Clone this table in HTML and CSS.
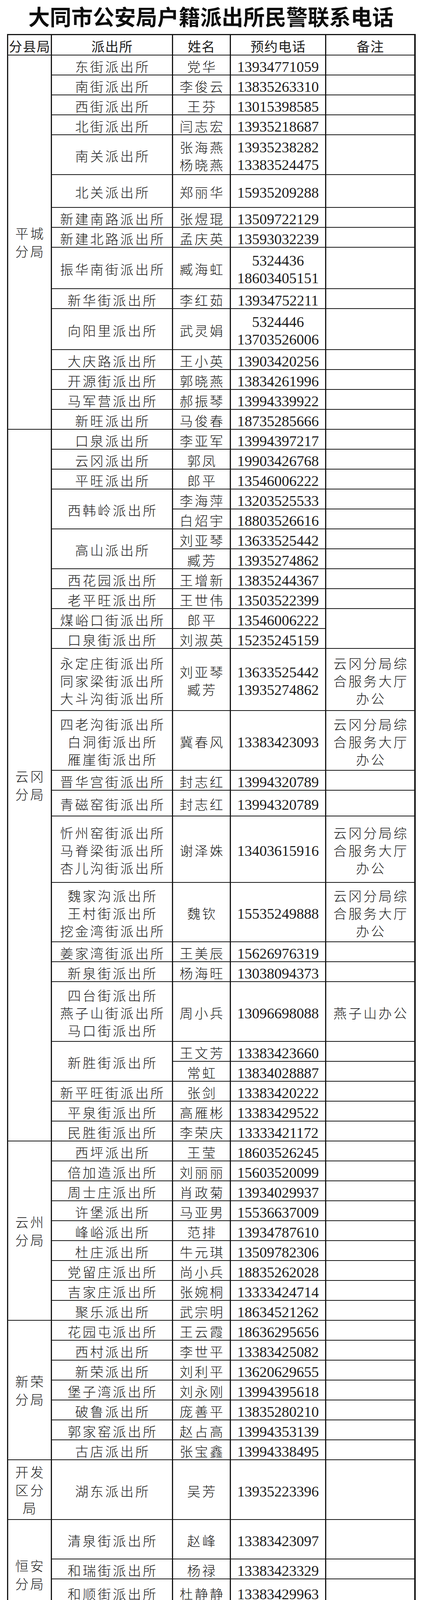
FILE: index.html
```html
<!DOCTYPE html>
<html lang="zh-CN">
<head>
<meta charset="utf-8">
<title>大同市公安局户籍派出所民警联系电话</title>
<link rel="stylesheet" href="styles.css">
</head>
<body>
<h1 class="title">大同市公安局户籍派出所民警联系电话</h1>
<table class="sheet">
<colgroup><col class="c1"><col class="c2"><col class="c3"><col class="c4"><col class="c5"></colgroup>
<tr class="hd"><th>分县局</th><th>派出所</th><th>姓名</th><th>预约电话</th><th>备注</th></tr>

<tr><td class="g" rowspan="15">平城<br>分局</td><td>东街派出所</td><td>党华</td><td class="ph">13934771059</td><td></td></tr>
<tr><td>南街派出所</td><td>李俊云</td><td class="ph">13835263310</td><td></td></tr>
<tr><td>西街派出所</td><td>王芬</td><td class="ph">13015398585</td><td></td></tr>
<tr><td>北街派出所</td><td>闫志宏</td><td class="ph">13935218687</td><td></td></tr>
<tr class="h102"><td>南关派出所</td><td class="ml">张海燕<br>杨晓燕</td><td class="ph ml">13935238282<br>13383524475</td><td></td></tr>
<tr class="h84"><td>北关派出所</td><td>郑丽华</td><td class="ph">15935209288</td><td></td></tr>
<tr><td>新建南路派出所</td><td>张煜琨</td><td class="ph">13509722129</td><td></td></tr>
<tr><td>新建北路派出所</td><td>孟庆英</td><td class="ph">13593032239</td><td></td></tr>
<tr class="h106"><td>振华南街派出所</td><td>臧海虹</td><td class="ph ml">5324436<br>18603405151</td><td></td></tr>
<tr><td>新华街派出所</td><td>李红茹</td><td class="ph">13934752211</td><td></td></tr>
<tr class="h105"><td>向阳里派出所</td><td>武灵娟</td><td class="ph ml">5324446<br>13703526006</td><td></td></tr>
<tr><td>大庆路派出所</td><td>王小英</td><td class="ph">13903420256</td><td></td></tr>
<tr><td>开源街派出所</td><td>郭晓燕</td><td class="ph">13834261996</td><td></td></tr>
<tr><td>马军营派出所</td><td>郝振琴</td><td class="ph">13994339922</td><td></td></tr>
<tr><td>新旺派出所</td><td>马俊春</td><td class="ph">18735285666</td><td></td></tr>

<tr><td class="g" rowspan="25">云冈<br>分局</td><td>口泉派出所</td><td>李亚军</td><td class="ph">13994397217</td><td></td></tr>
<tr><td>云冈派出所</td><td>郭凤</td><td class="ph">19903426768</td><td></td></tr>
<tr><td>平旺派出所</td><td>郎平</td><td class="ph">13546006222</td><td></td></tr>
<tr><td rowspan="2">西韩岭派出所</td><td>李海萍</td><td class="ph">13203525533</td><td></td></tr>
<tr><td>白炤宇</td><td class="ph">18803526616</td><td></td></tr>
<tr><td rowspan="2">高山派出所</td><td>刘亚琴</td><td class="ph">13633525442</td><td></td></tr>
<tr><td>臧芳</td><td class="ph">13935274862</td><td></td></tr>
<tr><td>西花园派出所</td><td>王增新</td><td class="ph">13835244367</td><td></td></tr>
<tr><td>老平旺派出所</td><td>王世伟</td><td class="ph">13503522399</td><td></td></tr>
<tr><td>煤峪口街派出所</td><td>郎平</td><td class="ph">13546006222</td><td rowspan="2"></td></tr>
<tr><td>口泉街派出所</td><td>刘淑英</td><td class="ph">15235245159</td></tr>
<tr class="h159"><td class="ml">永定庄街派出所<br>同家梁街派出所<br>大斗沟街派出所</td><td class="ml">刘亚琴<br>臧芳</td><td class="ph ml">13633525442<br>13935274862</td><td class="ml">云冈分局综<br>合服务大厅<br>办公</td></tr>
<tr class="h153"><td class="ml">四老沟街派出所<br>白洞街派出所<br>雁崖街派出所</td><td>冀春风</td><td class="ph">13383423093</td><td class="ml">云冈分局综<br>合服务大厅<br>办公</td></tr>
<tr><td>晋华宫街派出所</td><td>封志红</td><td class="ph">13994320789</td><td></td></tr>
<tr class="h66"><td>青磁窑街派出所</td><td>封志红</td><td class="ph">13994320789</td><td></td></tr>
<tr class="h170"><td class="ml">忻州窑街派出所<br>马脊梁街派出所<br>杏儿沟街派出所</td><td>谢泽姝</td><td class="ph">13403615916</td><td class="ml">云冈分局综<br>合服务大厅<br>办公</td></tr>
<tr class="h152"><td class="ml">魏家沟派出所<br>王村街派出所<br>挖金湾街派出所</td><td>魏钦</td><td class="ph">15535249888</td><td class="ml">云冈分局综<br>合服务大厅<br>办公</td></tr>
<tr><td>姜家湾街派出所</td><td>王美辰</td><td class="ph">15626976319</td><td></td></tr>
<tr><td>新泉街派出所</td><td>杨海旺</td><td class="ph">13038094373</td><td></td></tr>
<tr class="h153"><td class="ml">四台街派出所<br>燕子山街派出所<br>马口街派出所</td><td>周小兵</td><td class="ph">13096698088</td><td>燕子山办公</td></tr>
<tr><td rowspan="2">新胜街派出所</td><td>王文芳</td><td class="ph">13383423660</td><td></td></tr>
<tr><td>常虹</td><td class="ph">13834028887</td><td></td></tr>
<tr><td>新平旺街派出所</td><td>张剑</td><td class="ph">13383420222</td><td></td></tr>
<tr><td>平泉街派出所</td><td>高雁彬</td><td class="ph">13383429522</td><td></td></tr>
<tr><td>民胜街派出所</td><td>李荣庆</td><td class="ph">13333421172</td><td></td></tr>

<tr><td class="g" rowspan="9">云州<br>分局</td><td>西坪派出所</td><td>王莹</td><td class="ph">18603526245</td><td></td></tr>
<tr><td>倍加造派出所</td><td>刘丽丽</td><td class="ph">15603520099</td><td></td></tr>
<tr><td>周士庄派出所</td><td>肖政菊</td><td class="ph">13934029937</td><td></td></tr>
<tr><td>许堡派出所</td><td>马亚男</td><td class="ph">15536637009</td><td></td></tr>
<tr><td>峰峪派出所</td><td>范排</td><td class="ph">13934787610</td><td></td></tr>
<tr><td>杜庄派出所</td><td>牛元琪</td><td class="ph">13509782306</td><td></td></tr>
<tr><td>党留庄派出所</td><td>尚小兵</td><td class="ph">18835262028</td><td></td></tr>
<tr><td>吉家庄派出所</td><td>张婉桐</td><td class="ph">13333424714</td><td></td></tr>
<tr><td>聚乐派出所</td><td>武宗明</td><td class="ph">18634521262</td><td></td></tr>

<tr><td class="g" rowspan="7">新荣<br>分局</td><td>花园屯派出所</td><td>王云霞</td><td class="ph">18636295656</td><td></td></tr>
<tr><td>西村派出所</td><td>李世平</td><td class="ph">13383425082</td><td></td></tr>
<tr><td>新荣派出所</td><td>刘利平</td><td class="ph">13620629655</td><td></td></tr>
<tr><td>堡子湾派出所</td><td>刘永刚</td><td class="ph">13994395618</td><td></td></tr>
<tr><td>破鲁派出所</td><td>庞善平</td><td class="ph">13835280210</td><td></td></tr>
<tr><td>郭家窑派出所</td><td>赵占高</td><td class="ph">13994353139</td><td></td></tr>
<tr><td>古店派出所</td><td>张宝鑫</td><td class="ph">13994338495</td><td></td></tr>

<tr class="h153"><td class="g">开发<br>区分<br>局</td><td>湖东派出所</td><td>吴芳</td><td class="ph">13935223396</td><td></td></tr>

<tr class="h101"><td class="g" rowspan="4">恒安<br>分局</td><td>清泉街派出所</td><td>赵峰</td><td class="ph">13383423097</td><td></td></tr>
<tr><td>和瑞街派出所</td><td>杨禄</td><td class="ph">13383423329</td><td></td></tr>
<tr class="h69"><td>和顺街派出所</td><td>杜静静</td><td class="ph">13383429963</td><td></td></tr>
<tr class="h60"><td>平盛路派出所</td><td>麻秀芳</td><td class="ph">13383422991</td><td></td></tr>

<tr class="h102"><td class="g">御东<br>分局</td><td>水泊寺派出所</td><td>王亚兰</td><td class="ph">13835235176</td><td></td></tr>

<tr><td class="g" rowspan="12">阳高<br>县公<br>安局</td><td rowspan="2">龙泉派出所</td><td>曹瑞元</td><td class="ph">18636283951</td><td></td></tr>
<tr><td>陈晓岗</td><td class="ph">18935227177</td><td></td></tr>
<tr class="h50 thk"><td>罗文皂派出所</td><td>韩承霖</td><td class="ph">15386820003</td><td></td></tr>
<tr><td>长城派出所</td><td>贾龙鹏</td><td class="ph">18734287790</td><td></td></tr>
<tr><td>大白登派出所</td><td>王青</td><td class="ph">18636294576</td><td></td></tr>
<tr><td>狮子屯派出所</td><td>任志军</td><td class="ph">13546065860</td><td></td></tr>
<tr><td>王官屯派出所</td><td>许长江</td><td class="ph">13835233220</td><td></td></tr>
<tr><td>下深井派出所</td><td>薛跃文</td><td class="ph">13593055499</td><td></td></tr>
<tr><td>古城派出所</td><td>徐飞</td><td class="ph">13133129571</td><td></td></tr>
<tr><td>东小村派出所</td><td>陈志新</td><td class="ph">15003425888</td><td></td></tr>
<tr><td>友宰派出所</td><td>睢建梁</td><td class="ph">13620628789</td><td></td></tr>
<tr><td>鳌石派出所</td><td>李伟</td><td class="ph">13994441195</td><td></td></tr>

<tr><td class="g" rowspan="11">天镇<br>县公<br>安局</td><td>玉泉派出所</td><td>任丕军</td><td class="ph">13663522735</td><td></td></tr>
<tr><td>谷前堡派出所</td><td>逯雅楠</td><td class="ph">18535298235</td><td></td></tr>
<tr><td>米薪关派出所</td><td>闫维龙</td><td class="ph">13593035757</td><td></td></tr>
<tr><td>逯家湾派出所</td><td>刘洪海</td><td class="ph">13753264275</td><td></td></tr>
<tr><td>新平派出所</td><td>许卫锋</td><td class="ph">13008090877</td><td></td></tr>
<tr><td>三十里铺派出所</td><td>孙国伟</td><td class="ph">13546064106</td><td></td></tr>
<tr><td>赵家沟派出所</td><td>宋立海</td><td class="ph">13383425800</td><td></td></tr>
<tr class="h50"><td>贾家屯派出所</td><td>张学军</td><td class="ph">18535273083</td><td></td></tr>
<tr><td>南高崖派出所</td><td>杜兴录</td><td class="ph">13994352023</td><td></td></tr>
<tr><td>张西河派出所</td><td>贾虎文</td><td class="ph">15034233688</td><td></td></tr>
<tr><td>马家皂派出所</td><td>睢谢平</td><td class="ph">13028093300</td><td></td></tr>

<tr><td class="g" rowspan="17">浑源<br>县公<br>安局</td><td rowspan="2">永安派出所</td><td>刘艳霞</td><td class="ph">13935263827</td><td></td></tr>
<tr><td>翟敏敏</td><td class="ph">13835233959</td><td></td></tr>
<tr><td>下韩派出所</td><td>郝延伟</td><td class="ph">18636288110</td><td></td></tr>
<tr><td>大仁庄派出所</td><td>吴剑文</td><td class="ph">15203520951</td><td></td></tr>
<tr><td>蔡村派出所</td><td>郜捷</td><td class="ph">18535271597</td><td></td></tr>
<tr><td>千佛岭派出所</td><td>武自强</td><td class="ph">13134627669</td><td></td></tr>
<tr class="h50"><td>王庄堡派出所</td><td>雒晓超</td><td class="ph">15735121340</td><td></td></tr>
<tr><td>裴村派出所</td><td>刘旭</td><td class="ph">16634022324</td><td></td></tr>
<tr><td>东坊城派出所</td><td>王磊</td><td class="ph">13994413207</td><td></td></tr>
<tr><td>青磁窑派出所</td><td>曹雁军</td><td class="ph">13734203232</td><td></td></tr>
<tr><td>西留派出所</td><td>杨德志</td><td class="ph">15935216629</td><td></td></tr>
<tr><td>南榆林派出所</td><td>王泽超</td><td class="ph">13327528875</td><td></td></tr>
<tr><td>驼峰派出所</td><td>曹海东</td><td class="ph">13935263946</td><td></td></tr>
<tr><td>吴城派出所</td><td>赵俊</td><td class="ph">15835224597</td><td></td></tr>
<tr><td>西坊城派出所</td><td>范国盛</td><td class="ph">13994394633</td><td></td></tr>
<tr><td>官儿派出所</td><td>李颖</td><td class="ph">18635279708</td><td></td></tr>
<tr><td>沙圪坨派出所</td><td>刘润德</td><td class="ph">13191123569</td><td></td></tr>

<tr class="h66"><td class="g" rowspan="11">灵丘<br>县公<br>安局</td><td>武灵派出所</td><td>陈振华</td><td class="ph">13994321812</td><td></td></tr>
<tr class="h50"><td>上寨派出所</td><td>王海伟</td><td class="ph">13513660616</td><td></td></tr>
<tr><td>东河南派出所</td><td>张孝海</td><td class="ph">13753247060</td><td></td></tr>
<tr><td>落水河派出所</td><td>武凌波</td><td class="ph">13303423055</td><td></td></tr>
<tr><td>石家田派出所</td><td>孙飞龙</td><td class="ph">13935200220</td><td></td></tr>
<tr><td>柳科派出所</td><td>乔一江</td><td class="ph">18636813287</td><td></td></tr>
<tr><td>独峪派出所</td><td>邓保林</td><td class="ph">13994462535</td><td></td></tr>
<tr><td>赵北派出所</td><td>侯小锁</td><td class="ph">13934251985</td><td></td></tr>
<tr><td>下关派出所</td><td>刘拥兵</td><td class="ph">18735294675</td><td></td></tr>
<tr><td>红石塄派出所</td><td>张志强</td><td class="ph">13835207387</td><td></td></tr>
<tr class="h50"><td>白崖台派出所</td><td>刘晓虎</td><td class="ph">18835208589</td><td></td></tr>

<tr><td class="g" rowspan="8">广灵<br>县公<br>安局</td><td>壶泉派出所</td><td>杨帆</td><td class="ph">13623522841</td><td></td></tr>
<tr><td>蕉山派出所</td><td>李江</td><td class="ph">18635236806</td><td></td></tr>
<tr><td>加斗派出所</td><td>王正杰</td><td class="ph">15203422857</td><td></td></tr>
<tr><td>宜兴派出所</td><td>焦天红</td><td class="ph">15235206555</td><td></td></tr>
<tr><td>作疃派出所</td><td>张军</td><td class="ph">17735222229</td><td></td></tr>
<tr><td>斗泉派出所</td><td>智霆威</td><td class="ph">15135200977</td><td></td></tr>
<tr><td>南村派出所</td><td>陈全杰</td><td class="ph">13383426465</td><td></td></tr>
<tr><td>梁庄派出所</td><td>宋立河</td><td class="ph">18003525884</td><td></td></tr>

<tr><td class="g" rowspan="8">左云<br>县公<br>安局</td><td>云兴派出所</td><td>左志强</td><td class="ph">13835208444</td><td></td></tr>
<tr><td>店湾派出所</td><td>刘日宝</td><td class="ph">18636216051</td><td></td></tr>
<tr class="h50"><td>鹊儿山派出所</td><td>李满</td><td class="ph">18636261010</td><td></td></tr>
<tr><td>马道头派出所</td><td>李君</td><td class="ph">13935217855</td><td></td></tr>
<tr><td>小京庄派出所</td><td>宋昺</td><td class="ph">13623526855</td><td></td></tr>
<tr><td>张家场派出所</td><td>闫贵</td><td class="ph">15110755775</td><td></td></tr>
<tr><td>三屯派出所</td><td>张杰</td><td class="ph">18734295551</td><td></td></tr>
<tr class="h49"><td>管家堡派出所</td><td>田晓东</td><td class="ph">13753249170</td><td></td></tr>
</table>
</body>
</html>
```

FILE: styles.css
```css
* { box-sizing: border-box; }
html, body { margin: 0; padding: 0; background: #ffffff; }
body {
  width: 1080px;
  color: #1c1c1c;
  font-family: "Noto Sans CJK SC", "Noto Sans", sans-serif;
}
.title {
  margin: 0;
  height: 80px;
  line-height: 80px;
  text-align: center;
  font-size: 55px;
  font-weight: 700;
  color: #0d0d0d;
  letter-spacing: 0;
}
.sheet {
  margin: 7px 0 0 18px;
  width: 1046px;
  table-layout: fixed;
  border-collapse: separate;
  border-spacing: 0;
  border-style: solid;
  border-color: #161616;
  border-width: 3px 1px 1px 3px;
}
.c1 { width: 112px; }
.c2 { width: 310px; }
.c3 { width: 148px; }
.c4 { width: 244px; }
.c5 { width: 228px; }
.sheet tr { height: 51px; }
.sheet tr.hd { height: 52px; }
.sheet tr.h49 { height: 49px; }
.sheet tr.h50 { height: 50px; }
.sheet tr.h60 { height: 60px; }
.sheet tr.h66 { height: 66px; }
.sheet tr.h69 { height: 69px; }
.sheet tr.h84 { height: 84px; }
.sheet tr.h101 { height: 101px; }
.sheet tr.h102 { height: 102px; }
.sheet tr.h105 { height: 105px; }
.sheet tr.h106 { height: 106px; }
.sheet tr.h152 { height: 152px; }
.sheet tr.h153 { height: 153px; }
.sheet tr.h159 { height: 159px; }
.sheet tr.h170 { height: 170px; }
.sheet th, .sheet td {
  padding: 5px 0 0 4px;
  border-right: 3px solid #161616;
  border-bottom: 2px solid #161616;
  text-align: center;
  vertical-align: middle;
  font-size: 34px;
  line-height: 41px;
  letter-spacing: 4.5px;
  font-weight: 300;
  white-space: nowrap;
}
.sheet th {
  font-weight: 400;
  letter-spacing: 1.5px;
  padding-left: 1px;
}
.sheet tr.thk td { border-bottom-width: 3px; }
.sheet td.ml { line-height: 45px; }
.sheet td.ph {
  font-family: "Liberation Serif", "Times New Roman", serif;
  font-size: 38px;
  font-weight: 400;
  letter-spacing: 0;
  line-height: 38px;
  padding: 8px 0 0 0;
}
.sheet td.ph.ml { line-height: 45px; }
.sheet td.g {
  padding: 0 0 0 4px;
  line-height: 46px;
}
```
